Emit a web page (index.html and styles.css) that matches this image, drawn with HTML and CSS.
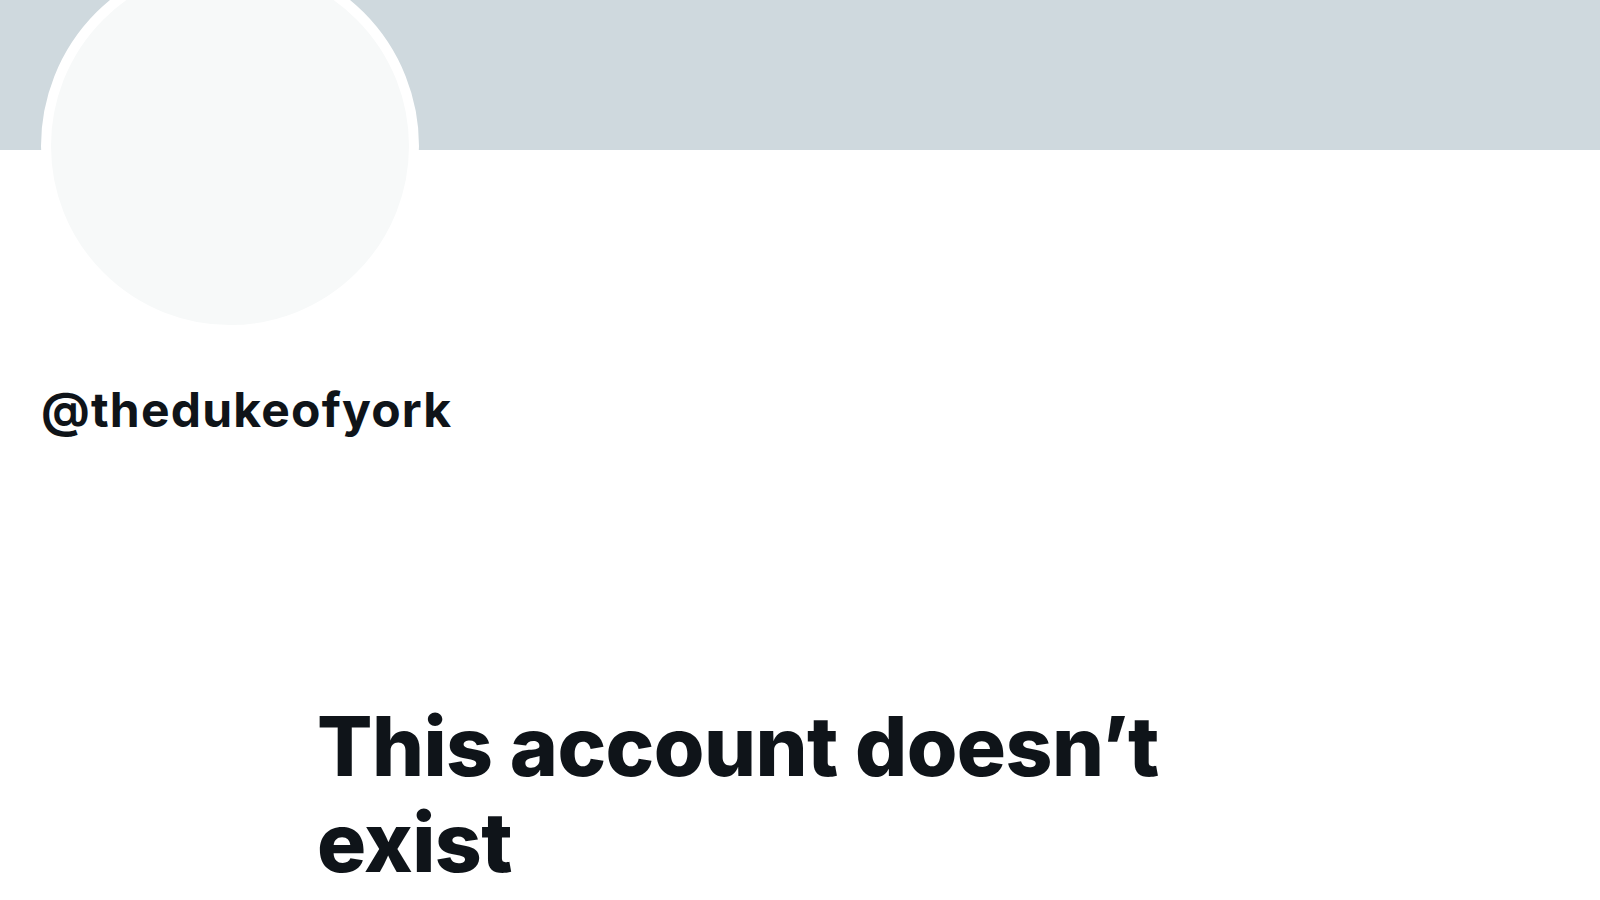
FILE: index.html
```html
<html>
<head>
  <title>@thedukeofyork</title>
  <link rel="stylesheet" href="styles.css">
</head>
<body>
  <div class="banner"></div>
  <div class="profile">
    <div class="avatar"></div>
    <div class="handle">@thedukeofyork</div>
  </div>
  <div class="empty-state">
    <h1 class="empty-title">This account doesn’t exist</h1>
  </div>
</body>
</html>
```

FILE: styles.css
```css
body {
  margin: 0;
  padding: 0;
  background-color: #ffffff;
  font-family: "Inter", "Roboto", sans-serif;
  color: #0f1419;
  overflow: hidden;
}

.banner {
  height: 150px;
  background-color: #cfd9de;
}

.profile {
  padding-left: 41px;
}

.avatar {
  width: 378px;
  height: 378px;
  box-sizing: border-box;
  margin-top: -193px;
  border: 10px solid #ffffff;
  border-radius: 50%;
  background-color: #f7f9f9;
}

.handle {
  margin-top: 46px;
  font-size: 48px;
  font-weight: 700;
  line-height: 58px;
  letter-spacing: 1.2px;
}

.empty-state {
  margin-top: 260px;
  margin-left: 317px;
  width: 900px;
}

.empty-title {
  margin: 0;
  font-size: 82px;
  font-weight: 800;
  line-height: 96px;
  letter-spacing: -0.6px;
}
```
